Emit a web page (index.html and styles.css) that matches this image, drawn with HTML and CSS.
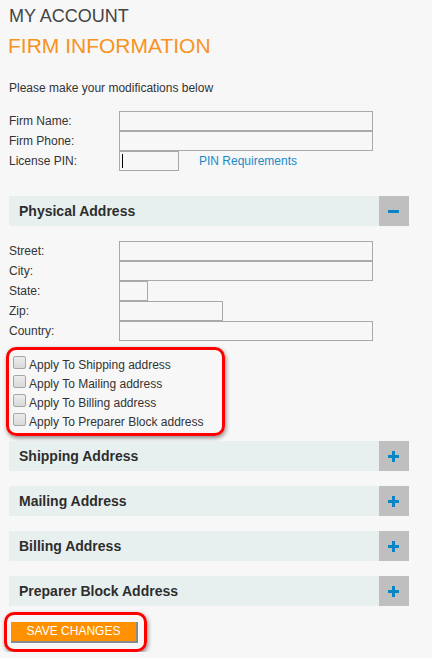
FILE: index.html
```html
<!DOCTYPE html>
<html>
<head>
<meta charset="utf-8">
<link rel="stylesheet" href="styles.css">
</head>
<body>
<div class="page">
  <h1 class="title">MY ACCOUNT</h1>
  <h2 class="subtitle">FIRM INFORMATION</h2>
  <p class="intro">Please make your modifications below</p>

  <div class="form-rows">
    <div class="row"><label>Firm Name:</label><input class="in wide" type="text"></div>
    <div class="row"><label>Firm Phone:</label><input class="in wide" type="text"></div>
    <div class="row"><label>License PIN:</label><span class="in pin"><span class="caret"></span></span><a class="link" href="#">PIN Requirements</a></div>
  </div>

  <div class="panel first">
    <span class="panel-title">Physical Address</span>
    <span class="toggle"><span class="minus"></span></span>
  </div>

  <div class="form-rows addr">
    <div class="row"><label>Street:</label><input class="in wide" type="text"></div>
    <div class="row"><label>City:</label><input class="in wide" type="text"></div>
    <div class="row"><label>State:</label><input class="in state" type="text"></div>
    <div class="row"><label>Zip:</label><input class="in zip" type="text"></div>
    <div class="row"><label>Country:</label><input class="in wide" type="text"></div>
  </div>

  <div class="highlight checks">
    <div class="check"><span class="box"></span>Apply To Shipping address</div>
    <div class="check"><span class="box"></span>Apply To Mailing address</div>
    <div class="check"><span class="box"></span>Apply To Billing address</div>
    <div class="check"><span class="box"></span>Apply To Preparer Block address</div>
  </div>

  <div class="panel after-checks">
    <span class="panel-title">Shipping Address</span>
    <span class="toggle"><span class="plus"></span></span>
  </div>
  <div class="panel">
    <span class="panel-title">Mailing Address</span>
    <span class="toggle"><span class="plus"></span></span>
  </div>
  <div class="panel">
    <span class="panel-title">Billing Address</span>
    <span class="toggle"><span class="plus"></span></span>
  </div>
  <div class="panel">
    <span class="panel-title">Preparer Block Address</span>
    <span class="toggle"><span class="plus"></span></span>
  </div>

  <div class="highlight save-wrap">
    <button class="save" type="button">SAVE CHANGES</button>
  </div>
</div>
</body>
</html>
```

FILE: styles.css
```css
html, body {
  margin: 0;
  padding: 0;
  background: #f7f7f7;
}
body {
  font-family: "Liberation Sans", Arial, sans-serif;
  font-size: 12px;
  color: #333;
}
.page {
  padding: 5px 0 0 9px;
  width: 400px;
}
.title {
  margin: 0;
  font-size: 18px;
  font-weight: normal;
  line-height: 22px;
  color: #444;
}
.subtitle {
  margin: 7px 0 0 -1px;
  font-size: 21px;
  font-weight: normal;
  line-height: 24px;
  color: #f7931e;
}
.intro {
  margin: 23px 0 0;
  line-height: 14px;
}
.form-rows {
  margin-top: 16px;
  display: flex;
  flex-direction: column;
}
.row {
  display: flex;
  align-items: center;
  height: 20px;
}
.row label {
  width: 110px;
  flex: none;
}
.in {
  box-sizing: border-box;
  height: 20px;
  border: 1px solid #a9a9a9;
  background: #f7f7f7;
  margin: 0;
  padding: 0 2px;
  font: inherit;
  display: inline-flex;
  align-items: center;
}
.wide { width: 254px; }
.pin { width: 60px; }
.state { width: 29px; }
.zip { width: 104px; }
.caret {
  display: block;
  width: 1px;
  height: 14px;
  background: #000;
}
.link {
  margin-left: 20px;
  color: #1b88c8;
  text-decoration: none;
}
.panel {
  display: flex;
  align-items: stretch;
  height: 30px;
  background: #e8f0ef;
  margin-top: 15px;
}
.panel.first { margin-top: 25px; }
.panel.after-checks { margin-top: 5px; }
.panel-title {
  flex: 1;
  display: flex;
  align-items: center;
  padding-left: 10px;
  font-size: 14px;
  font-weight: bold;
  color: #2d2d2d;
}
.toggle {
  width: 30px;
  background: #bfbfbf;
  position: relative;
}
.minus, .plus {
  position: absolute;
  left: 9px;
  top: 14px;
  width: 11px;
  height: 3px;
  background: #0b84c6;
}
.plus::after {
  content: "";
  position: absolute;
  left: 4px;
  top: -4px;
  width: 3px;
  height: 11px;
  background: #0b84c6;
}
.addr { margin-top: 15px; }
.highlight {
  border: 3px solid #f00;
  border-radius: 10px;
  box-shadow: 1px 2px 4px rgba(0,0,0,0.45);
}
.checks {
  margin: 6px 0 0 -3px;
  width: 209px;
  padding: 5px 0 2px 4px;
  display: flex;
  flex-direction: column;
}
.check {
  display: flex;
  align-items: center;
  height: 19px;
}
.box {
  box-sizing: border-box;
  width: 13px;
  height: 13px;
  margin-right: 3px;
  margin-top: -5px;
  border: 1px solid #a6a6a6;
  border-radius: 2px;
  background: linear-gradient(#ececec, #d9d9d9);
}
.save-wrap {
  margin: 6px 0 0 -5px;
  width: 133px;
  height: 34px;
  display: flex;
  align-items: center;
  padding-left: 4px;
}
.save {
  box-sizing: border-box;
  width: 127px;
  height: 21px;
  margin-top: 0;
  background: #ff9100;
  border: none;
  border-right: 2px solid #8a8a8a;
  border-bottom: 2px solid #8a8a8a;
  color: #fff;
  font-family: "Liberation Sans", Arial, sans-serif;
  font-size: 12px;
  padding: 0;
  text-align: center;
}
```
